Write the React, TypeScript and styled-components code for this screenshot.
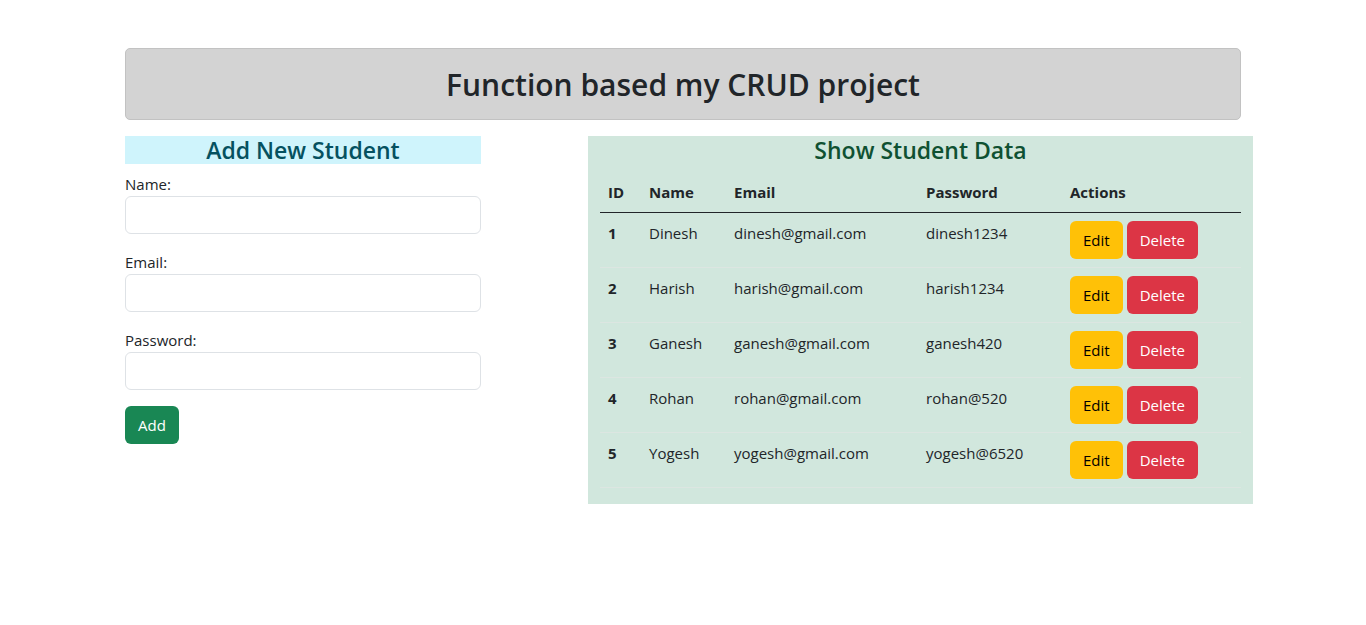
import React from 'react';
import styled, { createGlobalStyle } from 'styled-components';

const GlobalStyle = createGlobalStyle`
  body {
    margin: 0;
    font-family: "Open Sans", "Noto Sans", "Liberation Sans", sans-serif;
    font-size: 16px;
    line-height: 1.5;
    color: #212529;
    background: #ffffff;
  }
  * { box-sizing: border-box; }
`;

const Container = styled.div`
  width: 1116px;
  margin: 48px auto 0;
`;

const Header = styled.div`
  background: #d3d3d3;
  border: 1px solid #c2c2c2;
  border-radius: 5px;
  padding: 17px 16px 15px;
  margin-bottom: 16px;
  text-align: center;

  h2 {
    margin: 0;
    font-size: 30px;
    font-weight: 600;
    line-height: 38px;
  }
`;

const Row = styled.div`
  display: grid;
  grid-template-columns: 356px 665px;
  column-gap: 107px;
  align-items: start;
`;

const Heading = styled.h4<{ tone: 'info' | 'success' }>`
  margin: 0 0 8px;
  font-size: 23px;
  font-weight: 600;
  line-height: 28px;
  text-align: center;
  color: ${({ tone }) => (tone === 'info' ? '#055160' : '#0f5132')};
  background: ${({ tone }) => (tone === 'info' ? '#cff4fc' : 'transparent')};
`;

const Field = styled.div`
  margin-bottom: 16px;

  label {
    display: block;
    font-size: 15px;
    line-height: 24px;
  }

  input {
    display: block;
    width: 100%;
    height: 38px;
    border: 1px solid #dee2e6;
    border-radius: 6px;
    padding: 6px 12px;
    font: inherit;
    background: #fff;
  }
`;

const Button = styled.button<{ variant: 'success' | 'warning' | 'danger' }>`
  display: inline-block;
  height: 38px;
  padding: 6px 12px;
  font-family: inherit;
  font-size: 15px;
  line-height: 24px;
  border-radius: 6px;
  border: 1px solid transparent;
  cursor: pointer;
  background: ${({ variant }) =>
    variant === 'success' ? '#198754' : variant === 'warning' ? '#ffc107' : '#dc3545'};
  color: ${({ variant }) => (variant === 'warning' ? '#000' : '#fff')};
  & + & {
    margin-left: 4px;
  }
`;

const DataCol = styled.div`
  background: #d1e7dd;
  padding: 0 12px 16px;
`;

const Table = styled.table`
  width: 100%;
  border-collapse: collapse;
  font-size: 15px;

  th, td {
    padding: 8px;
    text-align: left;
    vertical-align: top;
    line-height: 24px;
  }

  thead th {
    font-weight: 700;
    border-bottom: 1px solid #212529;
  }

  tbody td {
    border-bottom: 1px solid #dce6e1;
  }

  tbody td:first-child {
    font-weight: 700;
  }
`;

const students = [
  { id: 1, name: 'Dinesh', email: 'dinesh@gmail.com', password: 'dinesh1234' },
  { id: 2, name: 'Harish', email: 'harish@gmail.com', password: 'harish1234' },
  { id: 3, name: 'Ganesh', email: 'ganesh@gmail.com', password: 'ganesh420' },
  { id: 4, name: 'Rohan', email: 'rohan@gmail.com', password: 'rohan@520' },
  { id: 5, name: 'Yogesh', email: 'yogesh@gmail.com', password: 'yogesh@6520' },
];

export default function App() {
  return (
    <>
      <GlobalStyle />
      <Container>
        <Header>
          <h2>Function based my CRUD project</h2>
        </Header>
        <Row>
          <div>
            <Heading tone="info">Add New Student</Heading>
            <form onSubmit={(e) => e.preventDefault()}>
              <Field>
                <label>Name:</label>
                <input type="text" />
              </Field>
              <Field>
                <label>Email:</label>
                <input type="email" />
              </Field>
              <Field>
                <label>Password:</label>
                <input type="password" />
              </Field>
              <Button variant="success">Add</Button>
            </form>
          </div>
          <DataCol>
            <Heading tone="success">Show Student Data</Heading>
            <Table>
              <colgroup>
                <col style={{ width: 41 }} />
                <col style={{ width: 85 }} />
                <col style={{ width: 192 }} />
                <col style={{ width: 144 }} />
                <col style={{ width: 179 }} />
              </colgroup>
              <thead>
                <tr>
                  <th>ID</th>
                  <th>Name</th>
                  <th>Email</th>
                  <th>Password</th>
                  <th>Actions</th>
                </tr>
              </thead>
              <tbody>
                {students.map((s) => (
                  <tr key={s.id}>
                    <td>{s.id}</td>
                    <td>{s.name}</td>
                    <td>{s.email}</td>
                    <td>{s.password}</td>
                    <td>
                      <Button variant="warning">Edit</Button>
                      <Button variant="danger">Delete</Button>
                    </td>
                  </tr>
                ))}
              </tbody>
            </Table>
          </DataCol>
        </Row>
      </Container>
    </>
  );
}
